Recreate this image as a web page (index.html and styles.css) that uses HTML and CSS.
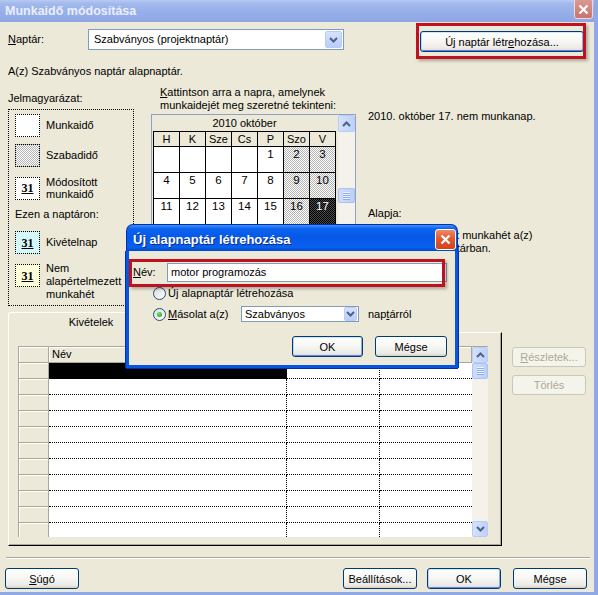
FILE: index.html
```html
<!DOCTYPE html>
<html lang="hu">
<head>
<meta charset="utf-8">
<title>Munkaidő módosítása</title>
<link rel="stylesheet" href="styles.css">
</head>
<body>
<div class="window">
  <div class="titlebar">
    <span class="title">Munkaidő módosítása</span>
    <span class="tb-close"><svg width="11" height="11" viewBox="0 0 11 11"><path d="M1.5 1.5 L9.5 9.5 M9.5 1.5 L1.5 9.5" stroke="#fff" stroke-width="2.2"/></svg></span>
  </div>

  <div class="row1">
    <span class="lbl-naptar"><u>N</u>aptár:</span>
    <div class="combo combo-main">
      <span class="combo-text">Szabványos (projektnaptár)</span>
      <span class="combo-btn"><svg width="9" height="6" viewBox="0 0 9 6"><path d="M1 1 L4.5 4.5 L8 1" fill="none" stroke="#4D6185" stroke-width="2"/></svg></span>
    </div>
    <div class="btn btn-new default">Új naptár létr<u>e</u>hozása...</div>
  </div>

  <div class="note">A(z) Szabványos naptár alapnaptár.</div>

  <div class="middle">
    <div class="legend-col">
      <div class="lg-label">Jelmagyarázat:</div>
      <div class="legend">
        <div class="lg-item i1"><span class="lg-box"></span><span class="lg-text">Munkaidő</span></div>
        <div class="lg-item i2"><span class="lg-box free"></span><span class="lg-text">Szabadidő</span></div>
        <div class="lg-item i3"><span class="lg-box"><span class="n31">31</span></span><span class="lg-text tight">Módosított<br>munkaidő</span></div>
        <div class="lg-sub">Ezen a naptáron:</div>
        <div class="lg-item i4"><span class="lg-box exc"><span class="n31">31</span></span><span class="lg-text">Kivételnap</span></div>
        <div class="lg-item i5"><span class="lg-box nondef"><span class="n31">31</span></span><span class="lg-text">Nem<br>alapértelmezett<br>munkahét</span></div>
      </div>
    </div>

    <div class="cal-col">
      <div class="cal-hint"><u>K</u>attintson arra a napra, amelynek<br>munkaidejét meg szeretné tekinteni:</div>
      <div class="cal-frame">
        <div class="cal-main">
          <div class="cal-title">2010 október</div>
          <div class="cal-grid">
            <div class="ch">H</div><div class="ch">K</div><div class="ch">Sze</div><div class="ch">Cs</div><div class="ch">P</div><div class="ch">Szo</div><div class="ch">V</div>
            <div class="cd"></div><div class="cd"></div><div class="cd"></div><div class="cd"></div><div class="cd">1</div><div class="cd we">2</div><div class="cd we">3</div>
            <div class="cd">4</div><div class="cd">5</div><div class="cd">6</div><div class="cd">7</div><div class="cd">8</div><div class="cd we">9</div><div class="cd we">10</div>
            <div class="cd">11</div><div class="cd">12</div><div class="cd">13</div><div class="cd">14</div><div class="cd">15</div><div class="cd we">16</div><div class="cd sel">17</div>
            <div class="cd">18</div><div class="cd">19</div><div class="cd">20</div><div class="cd">21</div><div class="cd">22</div><div class="cd we">23</div><div class="cd we">24</div>
            <div class="cd">25</div><div class="cd">26</div><div class="cd">27</div><div class="cd">28</div><div class="cd">29</div><div class="cd we">30</div><div class="cd we">31</div>
          </div>
        </div>
        <div class="vscroll cal-scroll">
          <div class="sb-btn"><svg width="9" height="6" viewBox="0 0 9 6"><path d="M1 5 L4.5 1.5 L8 5" fill="none" stroke="#4D6185" stroke-width="2"/></svg></div>
          <div class="sb-track"><div class="sb-thumb cal-thumb"></div></div>
          <div class="sb-btn"><svg width="9" height="6" viewBox="0 0 9 6"><path d="M1 1 L4.5 4.5 L8 1" fill="none" stroke="#4D6185" stroke-width="2"/></svg></div>
        </div>
      </div>
    </div>

    <div class="info-col">
      <div class="info-line">2010. október 17. nem munkanap.</div>
      <div class="info-base">Alapja:</div>
      <div class="info-desc">Az alapértelmezett munkahét a(z)<br>„Szabványos” naptárban.</div>
    </div>
  </div>

  <div class="lower">
    <div class="tabs-area">
      <div class="tabstrip"><div class="tab">Kivételek</div></div>
      <div class="panel">
        <div class="xtable">
          <div class="xgrid">
            <div class="rh"></div><div class="colh">Név</div><div class="colh"></div><div class="colh"></div>
            <div class="rh"></div><div class="c c1 sel-cell"></div><div class="c c2"></div><div class="c"></div>
            <div class="rh"></div><div class="c c1"></div><div class="c c2"></div><div class="c"></div>
            <div class="rh"></div><div class="c c1"></div><div class="c c2"></div><div class="c"></div>
            <div class="rh"></div><div class="c c1"></div><div class="c c2"></div><div class="c"></div>
            <div class="rh"></div><div class="c c1"></div><div class="c c2"></div><div class="c"></div>
            <div class="rh"></div><div class="c c1"></div><div class="c c2"></div><div class="c"></div>
            <div class="rh"></div><div class="c c1"></div><div class="c c2"></div><div class="c"></div>
            <div class="rh"></div><div class="c c1"></div><div class="c c2"></div><div class="c"></div>
            <div class="rh"></div><div class="c c1"></div><div class="c c2"></div><div class="c"></div>
            <div class="rh"></div><div class="c c1"></div><div class="c c2"></div><div class="c"></div>
            <div class="rh"></div><div class="c c1"></div><div class="c c2"></div><div class="c"></div>
            <div class="rh"></div><div class="c c1"></div><div class="c c2"></div><div class="c"></div>
          </div>
          <div class="vscroll tbl-scroll">
            <div class="sb-btn"><svg width="9" height="6" viewBox="0 0 9 6"><path d="M1 5 L4.5 1.5 L8 5" fill="none" stroke="#4D6185" stroke-width="2"/></svg></div>
            <div class="sb-track"><div class="sb-thumb tbl-thumb"></div></div>
            <div class="sb-btn"><svg width="9" height="6" viewBox="0 0 9 6"><path d="M1 1 L4.5 4.5 L8 1" fill="none" stroke="#4D6185" stroke-width="2"/></svg></div>
          </div>
        </div>
      </div>
    </div>
    <div class="side-btns">
      <div class="btn disabled"><u>R</u>észletek...</div>
      <div class="btn disabled btn-del">Törlés</div>
    </div>
  </div>

  <div class="separator"></div>

  <div class="bottom-btns">
    <div class="btn b-help"><u>S</u>úgó</div>
    <div class="btn b-opts">Beállítások...</div>
    <div class="btn b-ok default">OK</div>
    <div class="btn b-cancel">Mégse</div>
  </div>

  <div class="hl hl-new"></div>

  <div class="dialog">
    <div class="dlg-title">
      <span class="dlg-title-text">Új alapnaptár létrehozása</span>
      <span class="xp-close"><svg width="11" height="11" viewBox="0 0 11 11"><path d="M1.5 1.5 L9.5 9.5 M9.5 1.5 L1.5 9.5" stroke="#fff" stroke-width="2.2"/></svg></span>
    </div>
    <div class="dlg-body">
      <div class="name-row">
        <span class="dlg-lbl"><u>N</u>év:</span>
        <div class="textbox">motor programozás</div>
      </div>
      <div class="radio-row r1"><span class="radio"></span><span class="radio-lbl">Ú<u>j</u> alapnaptár létrehozása</span></div>
      <div class="radio-row r2">
        <span class="radio checked"></span><span class="radio-lbl copy-lbl"><u>M</u>ásolat a(z)</span>
        <div class="combo combo-small">
          <span class="combo-text">Szabványos</span>
          <span class="combo-btn small"><svg width="9" height="6" viewBox="0 0 9 6"><path d="M1 1 L4.5 4.5 L8 1" fill="none" stroke="#4D6185" stroke-width="2"/></svg></span>
        </div>
        <span class="from-lbl">nap<u>t</u>árról</span>
      </div>
      <div class="dlg-btns">
        <div class="btn default d-ok">OK</div>
        <div class="btn d-cancel">Mégse</div>
      </div>
    </div>
    <div class="hl hl-name"></div>
  </div>
</div>
</body>
</html>
```

FILE: styles.css
```css
* { box-sizing: border-box; }
html, body { margin: 0; padding: 0; }
body {
  width: 598px;
  height: 595px;
  overflow: hidden;
  background: #ECE9D8;
  font-family: "Liberation Sans", Arial, sans-serif;
  font-size: 11px;
  color: #000;
}
u { text-decoration: underline; text-underline-offset: 1px; }

.window {
  position: relative;
  width: 598px;
  height: 595px;
  background: #ECE9D8;
  border-right: 4px solid #8FA8E6;
  border-bottom: 3px solid #8FA8E6;
}

/* Title bar (inactive) */
.titlebar {
  height: 22px;
  display: flex;
  align-items: center;
  justify-content: space-between;
  background: linear-gradient(180deg, #B7C9F2 0%, #A1B8EC 18%, #97AFE9 55%, #8EA7E4 100%);
}
.title {
  padding-left: 5px;
  font-weight: bold;
  font-size: 12.5px;
  color: #E9EFFC;
}
.tb-close {
  align-self: flex-start;
  margin-top: -2px;
  margin-right: 1px;
  width: 19px;
  height: 21px;
  border: 1px solid #E9D9DC;
  border-radius: 3px;
  background: linear-gradient(180deg, #DC9A94, #C9746D);
  display: flex;
  align-items: center;
  justify-content: center;
  padding-top: 2px;
}

/* Row 1 */
.row1 {
  display: flex;
  align-items: flex-start;
  margin-top: 7px;
  padding-left: 8px;
  height: 22px;
}
.lbl-naptar { width: 80px; line-height: 21px; }
.combo {
  display: flex;
  background: #fff;
  border: 1px solid #7F9DB9;
}
.combo-main { width: 256px; height: 21px; }
.combo-text { flex: 1; padding-left: 5px; line-height: 19px; white-space: nowrap; }
.combo-btn {
  width: 17px;
  margin: 1px;
  border: 1px solid #B8CCF5;
  border-radius: 2px;
  background: linear-gradient(180deg, #D6E2FD, #B9CDF8);
  display: flex;
  align-items: center;
  justify-content: center;
}
.btn-new { margin-left: 76px; margin-top: 2px; width: 164px; height: 20px; }

/* Buttons */
.btn {
  display: flex;
  align-items: center;
  justify-content: center;
  height: 21px;
  border: 1px solid #003C74;
  border-radius: 3px;
  background: linear-gradient(180deg, #FFFFFF 0%, #F7F7F4 45%, #ECEBE6 85%, #D8D2C6 100%);
  white-space: nowrap;
}
.btn.default {
  box-shadow: inset 0 1px #CEE7FF, inset 1px 0 #BCD4F6, inset -1px 0 #89ADE4, inset 0 -1px #6982EE;
}
.btn.disabled {
  border-color: #C9C7BA;
  color: #ACA899;
  background: #F5F4EA;
}

.note { margin-top: 13px; padding-left: 8px; line-height: 14px; }

/* Middle */
.middle {
  display: flex;
  align-items: flex-start;
  margin-top: 8px;
  padding-left: 8px;
}
.legend-col { width: 126px; padding-top: 6px; }
.lg-label { line-height: 13px; }
.legend {
  margin-top: 4px;
  height: 197px;
  border: 1px dotted #000;
  padding: 4px 0 0 6px;
}
.lg-item { display: flex; align-items: center; }
.lg-item.i1 { height: 23px; }
.lg-item.i2 { height: 23px; margin-top: 7px; }
.lg-item.i3 { height: 24px; margin-top: 9px; }
.lg-item.i4 { height: 23px; margin-top: 10px; }
.lg-item.i5 { align-items: flex-start; margin-top: 8px; }
.lg-item.i5 .lg-box { margin-top: 2px; }
.lg-sub { margin-top: 8px; line-height: 13px; }
.lg-box {
  flex: none;
  width: 25px;
  height: 23px;
  border: 1px dotted #000;
  background: #fff;
  display: flex;
  align-items: center;
  justify-content: center;
}
.lg-box.free { background: repeating-conic-gradient(#B4B4B4 0 25%, #FFFFFF 0 50%) 0 0 / 2px 2px; }
.lg-box.exc { background: repeating-conic-gradient(#C2F2F6 0 25%, #E9FEFF 0 50%) 0 0 / 2px 2px; }
.lg-box.nondef { background: repeating-conic-gradient(#FFFFC8 0 25%, #FFFFF0 0 50%) 0 0 / 2px 2px; }
.n31 {
  font-family: "Liberation Serif", "Times New Roman", serif;
  font-weight: bold;
  font-size: 12px;
  text-decoration: underline;
  line-height: 12px;
}
.lg-text { margin-left: 6px; line-height: 13px; }
.lg-text.tight { line-height: 12px; }

/* Calendar */
.cal-col { margin-left: 17px; width: 205px; }
.cal-hint { line-height: 13px; padding-left: 9px; white-space: nowrap; }
.cal-frame {
  margin-top: 2px;
  width: 205px;
  border: 1px solid #8FA2C4;
  display: flex;
  background: #ECE9D8;
}
.cal-main { padding-left: 1px; padding-bottom: 3px; }
.cal-title { height: 16px; line-height: 17px; text-align: center; }
.cal-grid {
  display: grid;
  grid-template-columns: repeat(7, 25px);
  grid-template-rows: 14px repeat(5, 25px);
  gap: 1px;
  width: 183px;
  background: #000;
  border: 1px solid #000;
}
.ch { background: #ECE9D8; text-align: center; line-height: 14px; }
.cd { background: #fff; text-align: center; padding-top: 1px; line-height: 13px; font-size: 11.5px; }
.cd.we { background: repeating-conic-gradient(#B4B4B4 0 25%, #FFFFFF 0 50%) 0 0 / 2px 2px; }
.cd.sel { background: repeating-conic-gradient(#000 0 25%, #4A4A4A 0 50%) 0 0 / 2px 2px; color: #fff; }

.vscroll { display: flex; flex-direction: column; background: #F4F2EA; }
.cal-scroll { width: 17px; margin-left: 2px; }
.tbl-scroll { width: 16px; }
.sb-btn {
  flex: none;
  height: 17px;
  border: 1px solid #B8CCF5;
  border-radius: 2px;
  background: linear-gradient(90deg, #D5E1FD, #BFD1F9);
  display: flex;
  align-items: center;
  justify-content: center;
}
.tbl-scroll .sb-btn { height: 16px; }
.sb-track { flex: 1; }
.sb-thumb {
  height: 15px;
  border: 1px solid #A9C1F3;
  border-radius: 2px;
  background:
    repeating-linear-gradient(180deg, #EEF4FE 0 1px, #8CACEC 1px 2px) center / 7px 8px no-repeat,
    linear-gradient(90deg, #CFDDFC, #BCCFF8);
}
.cal-thumb { margin-top: 56px; }
.tbl-thumb { margin-top: 0; height: 16px; }

/* Info */
.info-col { margin-left: 12px; padding-top: 24px; white-space: nowrap; }
.info-line { line-height: 13px; }
.info-base { margin-top: 84px; line-height: 13px; }
.info-desc { margin-top: 9px; line-height: 13px; }

/* Lower */
.lower { display: flex; align-items: flex-start; margin-top: 6px; padding-left: 8px; }
.tabs-area { width: 494px; }
.tabstrip { height: 20px; display: flex; align-items: flex-end; }
.tab {
  position: relative;
  z-index: 1;
  width: 166px;
  height: 21px;
  margin-bottom: -1px;
  border-top: 1px solid #fff;
  border-left: 1px solid #fff;
  border-right: 1px solid #ACA899;
  border-radius: 3px 3px 0 0;
  background: #ECE9D8;
  text-align: center;
  line-height: 19px;
}
.panel {
  height: 214px;
  border-top: 1px solid #fff;
  border-left: 1px solid #fff;
  border-right: 1px solid #000;
  border-bottom: 1px solid #000;
  box-shadow: inset -1px -1px #ACA899;
  padding: 13px 0 0 9px;
}
.xtable {
  width: 470px;
  height: 191px;
  border-top: 1px solid #ACA899;
  border-left: 1px solid #ACA899;
  display: flex;
  overflow: hidden;
  background: #fff;
}
.xgrid {
  display: grid;
  grid-template-columns: 30px 238px 93px 92px;
  grid-auto-rows: 16px;
  align-content: start;
}
.rh {
  background: #ECE9D8;
  border-right: 1px solid #ACA899;
  border-bottom: 1px solid #ACA899;
  box-shadow: inset 1px 1px #FFFFFF;
}
.colh {
  background: #ECE9D8;
  border-right: 1px solid #ACA899;
  border-bottom: 1px solid #ACA899;
  box-shadow: inset 1px 1px #FFFFFF;
  padding-left: 3px;
  line-height: 15px;
}
.c { background: #fff; border-bottom: 1px dotted #000; }
.c1, .c2 { border-right: 1px dotted #000; }
.sel-cell { background: #000; }

.side-btns { margin-left: 10px; margin-top: 35px; width: 74px; }
.side-btns .btn { height: 20px; }
.side-btns .btn-del { margin-top: 8px; }

.separator {
  margin: 11px 0 0 6px;
  width: 584px;
  height: 2px;
  border-top: 1px solid #ACA899;
  border-bottom: 1px solid #FFFFFF;
}

.bottom-btns { display: flex; margin-top: 9px; }
.bottom-btns .btn { width: 74px; }
.b-help { margin-left: 5px; }
.b-opts { margin-left: 264px; }
.b-ok { margin-left: 10px; }
.b-cancel { margin-left: 12px; }

/* Red highlight frames (overlays) */
.hl {
  position: absolute;
  z-index: 5;
  border: 3px solid #BE1220;
  box-shadow: 2px 2px 3px rgba(0, 0, 0, 0.28);
}
.hl-new { left: 416px; top: 23px; width: 170px; height: 36px; }
.hl-name { left: 3px; top: 35px; width: 316px; height: 28px; }

/* Dialog (overlay) */
.dialog {
  position: absolute;
  z-index: 10;
  left: 126px;
  top: 224px;
  width: 332px;
  height: 144px;
  display: flex;
  flex-direction: column;
}
.dlg-title {
  height: 27px;
  flex: none;
  display: flex;
  align-items: flex-start;
  justify-content: space-between;
  border-radius: 7px 7px 0 0;
  background: linear-gradient(180deg, #3F93FA 0%, #0D62EF 14%, #0558E8 50%, #0A60EE 86%, #0047D0 100%);
  border: 1px solid #0030B0;
  border-bottom: none;
}
.dlg-title-text {
  padding: 7px 0 0 6px;
  font-weight: bold;
  font-size: 13px;
  color: #fff;
  text-shadow: 1px 1px #0A2A8A;
}
.xp-close {
  margin: 4px 1px 0 0;
  width: 21px;
  height: 21px;
  border: 1px solid #fff;
  border-radius: 3px;
  background: linear-gradient(180deg, #EE8A66 0%, #E25A30 45%, #D04418 100%);
  display: flex;
  align-items: center;
  justify-content: center;
}
.dlg-body {
  flex: 1;
  background: #ECE9D8;
  border-left: 3px solid #0756E0;
  border-right: 3px solid #0756E0;
  border-bottom: 3px solid #0756E0;
  box-shadow: -1px 0 #0030B0, 1px 0 #0030B0, 0 1px #0030B0;
  padding-top: 12px;
}
.name-row { display: flex; height: 19px; }
.dlg-lbl { width: 38px; padding-left: 4px; line-height: 19px; }
.textbox {
  width: 280px;
  height: 19px;
  border: 1px solid #7F9DB9;
  background: #fff;
  padding-left: 3px;
  line-height: 17px;
}
.radio-row { display: flex; align-items: center; padding-left: 24px; }
.radio-row.r1 { margin-top: 5px; height: 13px; }
.radio-row.r2 { margin-top: 6px; height: 16px; }
.radio {
  flex: none;
  width: 13px;
  height: 13px;
  border-radius: 50%;
  border: 1px solid #1C5180;
  background: linear-gradient(135deg, #DCDBD5, #FFFFFF);
  display: flex;
  align-items: center;
  justify-content: center;
}
.radio.checked::after {
  content: "";
  width: 5px;
  height: 5px;
  border-radius: 50%;
  background: radial-gradient(circle at 40% 35%, #6EE06E, #1E9A1E);
}
.radio-lbl { margin-left: 2px; line-height: 13px; white-space: nowrap; }
.copy-lbl { width: 73px; }
.combo-small { width: 118px; height: 16px; }
.combo-small .combo-text { padding-left: 3px; line-height: 14px; }
.combo-btn.small { width: 13px; margin: 0 1px 0 0; }
.from-lbl { margin-left: 9px; line-height: 13px; }
.dlg-btns {
  display: flex;
  justify-content: flex-end;
  gap: 12px;
  margin-top: 14px;
  padding-right: 8px;
}
.d-ok { width: 71px; }
.d-cancel { width: 72px; }
```
